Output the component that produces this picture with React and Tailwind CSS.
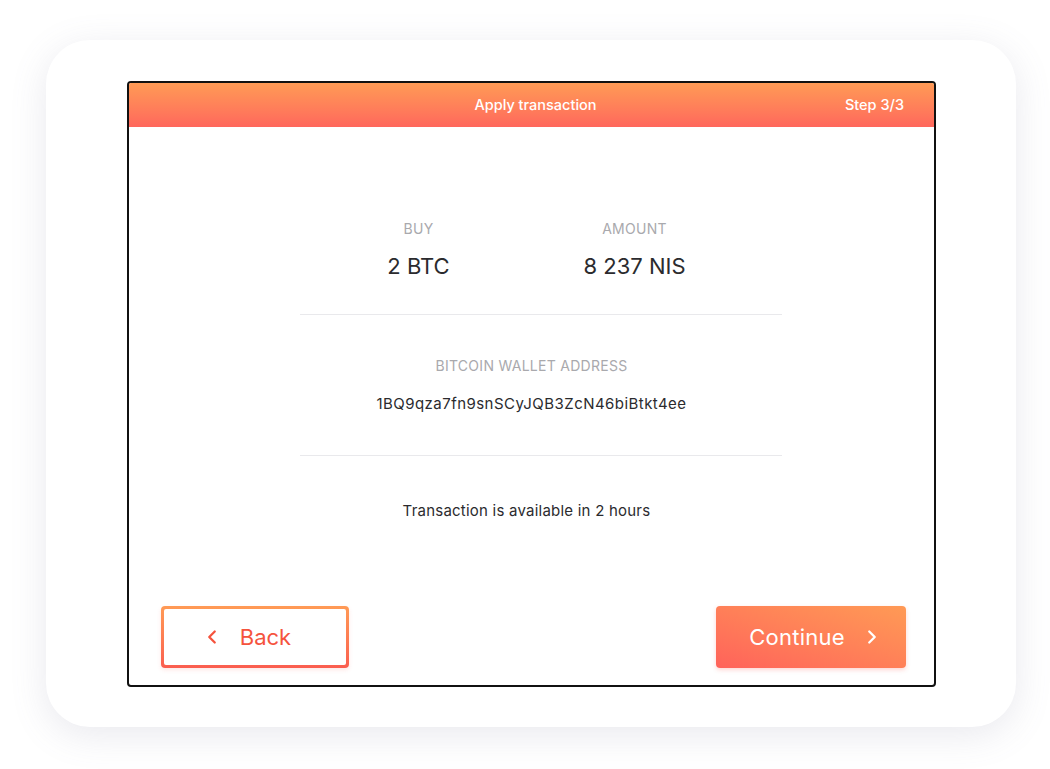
import React from "react";
import { ChevronLeft, ChevronRight } from "lucide-react";

const font = { fontFamily: "Inter, 'Liberation Sans', sans-serif" };

const Divider = () => <div className="w-[482px] h-px bg-[#e9e9ec] ml-[18px]" />;

const Stat = ({ label, value }) => (
  <div className="flex flex-col items-center w-[216px]">
    <div className="text-[14px] leading-4 text-[#a9a9ad] uppercase tracking-[0.02em]">{label}</div>
    <div className="mt-[15px] text-[22px] leading-7 text-[#2b2b2e]">{value}</div>
  </div>
);

export default function App() {
  return (
    <div className="w-[1050px] h-[769px] bg-white pt-[40px] pl-[46px]" style={font}>
      <div className="w-[970px] h-[687px] rounded-[44px] bg-white shadow-[0_8px_36px_rgba(120,120,150,0.16)] pt-[41px] pl-[81px]">
        <div className="w-[809px] h-[606px] border-2 border-[#111] rounded-[4px] flex flex-col overflow-hidden">
          <div className="h-[44px] shrink-0 bg-gradient-to-b from-[#ff9a55] to-[#ff675c] flex items-center relative px-[30px]">
            <div className="flex-1 text-center text-white text-[14.5px] font-medium pl-[8px]">Apply transaction</div>
            <div className="absolute right-[30px] top-1/2 -translate-y-1/2 text-white text-[14.5px] font-medium">Step 3/3</div>
          </div>

          <div className="flex-1 flex flex-col items-center pt-[94px]">
            <div className="flex pr-[10px]">
              <Stat label="Buy" value="2 BTC" />
              <Stat label="Amount" value="8 237 NIS" />
            </div>
            <div className="mt-[34px]"><Divider /></div>
            <div className="mt-[43px] text-[14px] leading-4 text-[#a9a9ad] tracking-[0.02em]">BITCOIN WALLET ADDRESS</div>
            <div className="mt-[20px] text-[15px] leading-5 text-[#2b2b2e] tracking-[0.03em]">1BQ9qza7fn9snSCyJQB3ZcN46biBtkt4ee</div>
            <div className="mt-[41px]"><Divider /></div>
            <div className="mt-[45px] text-[15px] leading-5 text-[#2b2b2e] tracking-[0.015em] pr-[10px]">Transaction is available in 2 hours</div>

            <div className="mt-auto mb-[17px] w-full flex justify-between pl-[32px] pr-[28px]">
              <button className="w-[188px] h-[62px] rounded-[4px] p-[3px] bg-gradient-to-b from-[#ff9a55] to-[#fa5d4f] shadow-[0_2px_4px_rgba(250,93,79,0.15)]">
                <div className="w-full h-full bg-white rounded-[2px] flex items-center justify-center gap-[17px] pr-[18px] text-[#f5533d]">
                  <ChevronLeft size={22} strokeWidth={2.5} />
                  <span className="text-[22px] leading-7">Back</span>
                </div>
              </button>
              <button className="w-[190px] h-[62px] rounded-[4px] bg-gradient-to-tr from-[#ff625a] to-[#ff9a55] shadow-[0_2px_4px_rgba(250,93,79,0.25)] flex items-center justify-center gap-[16px] pl-[10px] text-white">
                <span className="text-[22px] leading-7 tracking-[0.01em]">Continue</span>
                <ChevronRight size={22} strokeWidth={2.5} />
              </button>
            </div>
          </div>
        </div>
      </div>
    </div>
  );
}
